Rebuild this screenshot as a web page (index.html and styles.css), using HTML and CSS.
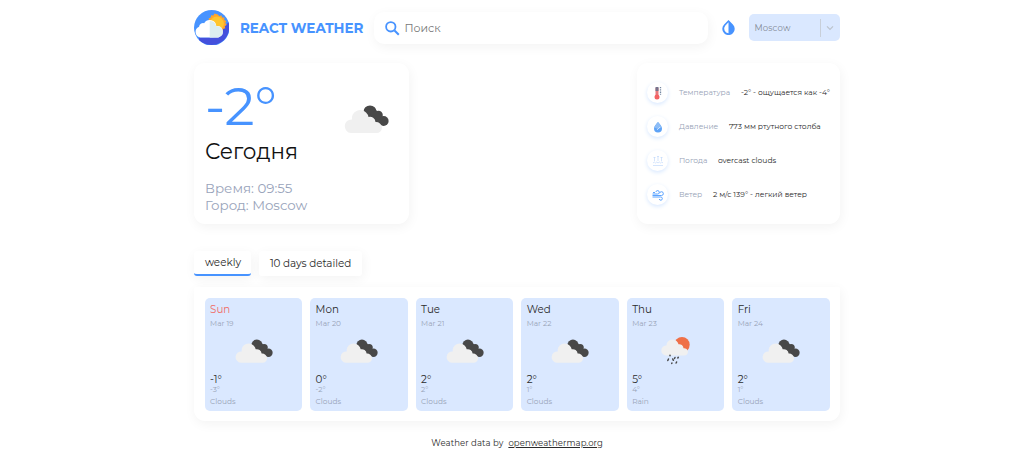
FILE: index.html
```html
<!DOCTYPE html>
<html lang="ru">
<head>
<meta charset="utf-8">
<title>React Weather</title>
<link rel="stylesheet" href="styles.css">
</head>
<body>
<svg class="defs" width="0" height="0" aria-hidden="true">
  <symbol id="clouds" viewBox="0 0 45 28">
    <g fill="#484848"><circle cx="26" cy="7" r="6.6"/><circle cx="34.5" cy="10" r="4.3"/><circle cx="39.6" cy="16" r="5"/><path d="M24 11l8-6 7 8-1 7-8-3z"/></g>
    <path fill="#f0f0f0" d="M7 28a6.7 6.7 0 0 1 1-13.5A8.300 8.300 0 0 1 22 7.500a8 8 0 0 1 2.500 4.500 5.600 5.600 0 0 1 7 5A6 6 0 0 1 38 22.500a5.500 5.500 0 0 1-5.500 5.500z"/>
  </symbol>
  <symbol id="rain" viewBox="0 0 29 28">
    <circle cx="21" cy="7.700" r="7.700" fill="#ef7048"/>
    <path fill="#f0f0f0" d="M5 18.500A5 5 0 0 1 5.500 8.500 6 6 0 0 1 15.500 4a6 6 0 0 1 2 3.200 4.300 4.300 0 0 1 5 4A4 4 0 0 1 27 14.800a3.900 3.900 0 0 1-4 3.700z"/>
    <path stroke="#4a4a4a" stroke-width="1.500" stroke-linecap="round" d="M9 18.300v.5M7.500 22l-.7 1.500M11.700 22l.7 1.300M14 20.500l-.5 1M17.300 20.300l-.5.700M11 26l-.3.400M15.600 25l-.5 1"/>
  </symbol>
</svg>
<div class="container">
  <header class="header">
    <svg class="logo" viewBox="0 0 35 35">
      <circle cx="17.500" cy="17.500" r="17.500" fill="#4793ff"/>
      <path fill="#4450dc" d="M5 27h14L34 12a17.500 17.500 0 0 1-29 17.500z"/>
      <path fill="#ffa62b" d="M23.500 4.500l1.500 1.700 2-1 .7 2.200 2.300.1-.2 2.300 2.200 1-1.200 2 1.500 1.800-2 1.300.6 2.200-2.300.6-.4 2.300-2.200-.4-1.500 1.800-9-4-1-10 2-1 .3-2.200 2.200.3 1.200-2z"/>
      <circle cx="22.500" cy="13.500" r="7" fill="#ffc52e"/>
      <path fill="#fff" d="M6 27a5.500 5.500 0 0 1-1-10.500 4 4 0 0 1 5-3.500 6.500 6.500 0 0 1 12 3 5.500 5.500 0 0 1 3 10.500q-1 .5-2 .5z"/>
      <path fill="#dcedf0" d="M15.500 10.800a6.500 6.500 0 0 1 6.500 5.200 5.600 5.600 0 0 1 3 10.700l-1.500.3h-8z"/>
    </svg>
    <div class="title">REACT WEATHER</div>
    <div class="search">
      <svg viewBox="0 0 15 15"><circle cx="5.800" cy="5.800" r="4.700" fill="none" stroke="#4793ff" stroke-width="1.800"/><path d="M9.500 9.500l4.300 4.300" stroke="#4793ff" stroke-width="2"/></svg>
      <span class="search-text">Поиск</span>
    </div>
    <svg class="drop" viewBox="0 0 13 15"><path fill="#4793ff" d="M6.500 0L2.100 4.500a6.200 6.200 0 1 0 8.800 0z"/><path fill="#fff" d="M6.500 2.300v10.900A4.600 4.600 0 0 1 3.200 5.700z"/></svg>
    <div class="select"><span class="select-text">Moscow</span><i></i><svg viewBox="0 0 8 6"><path d="M1 1.300l3 3 3-3" fill="none" stroke="#bcc3cc" stroke-width="1.200"/></svg></div>
  </header>

  <section class="top">
    <div class="today">
      <div class="temp">-2°</div>
      <div class="label">Сегодня</div>
      <div class="meta">Время: 09:55</div>
      <div class="meta city">Город: Moscow</div>
      <svg class="today-icon"><use href="#clouds"/></svg>
    </div>
    <div class="info">
      <div class="row"><span class="dot"><svg viewBox="0 0 12 14"><path d="M3.500 2h3v10h-3z" fill="#e9777b"/><circle cx="5" cy="11" r="2.500" fill="#f46263"/><path d="M3.500 1h3v4h-3z" fill="#77738c"/><path d="M8.500 1v8" stroke="#7487a1" stroke-width="1.300" stroke-dasharray="1 .7"/></svg></span><span class="key k1">Температура</span><span class="val">-2° - ощущается как -4°</span></div>
      <div class="row"><span class="dot"><svg viewBox="0 0 12 14"><path fill="#5ea3f7" d="M6 2Q2 6.200 2 8.500a4 4 0 0 0 8 0Q10 6.200 6 2z"/><path fill="#8dbdf6" d="M6 2Q2.500 6 2.400 7.500L6 9l3.600-1.500Q9 5.500 6 2z"/><path d="M5 10l3-3" stroke="#e5f1ff" stroke-width=".7"/></svg></span><span class="key k2">Давление</span><span class="val">773 мм ртутного столба</span></div>
      <div class="row"><span class="dot"><svg viewBox="0 0 12 14" fill="none" stroke="#c3dafa" stroke-width=".7"><path d="M2.500 7V3m-1 1l1-1 1 1M6 7V2M5 3l1-1 1 1M9.500 7V3m-1 1l1-1 1 1M1 9l1.300-1 1.300 1 1.200-1L6 9l1.300-1 1.300 1 1.200-1L11 9M1 11.500h10"/></svg></span><span class="key k3">Погода</span><span class="val">overcast clouds</span></div>
      <div class="row"><span class="dot"><svg viewBox="0 0 12 14" fill="none" stroke="#5ca4ff" stroke-width="1"><path d="M.5 6h5a1.700 1.700 0 1 0-1.600-2M.5 7.500h9a1.900 1.900 0 1 0-1.900-2.300M.5 9h8.200a1.600 1.600 0 1 1-1.500 2M1 4.500h2"/></svg></span><span class="key k4">Ветер</span><span class="val">2 м/с 139° - легкий ветер</span></div>
    </div>
  </section>

  <nav class="tabs"><div class="tab active"><span>weekly</span></div><div class="tab wide"><span>10 days detailed</span></div></nav>

  <section class="days">
    <div class="day"><div class="name sun">Sun</div><div class="date">Mar 19</div><svg class="cloud"><use href="#clouds"/></svg><div class="hi">-1°</div><div class="lo">-3°</div><div class="desc">Clouds</div></div>
    <div class="day"><div class="name">Mon</div><div class="date">Mar 20</div><svg class="cloud"><use href="#clouds"/></svg><div class="hi">0°</div><div class="lo">-2°</div><div class="desc">Clouds</div></div>
    <div class="day"><div class="name">Tue</div><div class="date">Mar 21</div><svg class="cloud"><use href="#clouds"/></svg><div class="hi">2°</div><div class="lo">2°</div><div class="desc">Clouds</div></div>
    <div class="day"><div class="name">Wed</div><div class="date">Mar 22</div><svg class="cloud"><use href="#clouds"/></svg><div class="hi">2°</div><div class="lo">1°</div><div class="desc">Clouds</div></div>
    <div class="day"><div class="name">Thu</div><div class="date">Mar 23</div><svg class="cloud rain"><use href="#rain"/></svg><div class="hi">5°</div><div class="lo">4°</div><div class="desc">Rain</div></div>
    <div class="day"><div class="name">Fri</div><div class="date">Mar 24</div><svg class="cloud"><use href="#clouds"/></svg><div class="hi">2°</div><div class="lo">1°</div><div class="desc">Clouds</div></div>
  </section>

  <footer class="footer"><span>Weather data by</span><a>openweathermap.org</a></footer>
</div>
</body>
</html>
```
FILE: styles.css
```css
* { box-sizing: border-box; }
body { margin: 0; background: #fff; color: #2b2b2b; font-family: Montserrat, Inter, sans-serif; white-space: nowrap; }
.defs { position: absolute; }
svg { display: block; flex: none; }
.container { width: 646.500px; margin-left: 193.900px; padding-top: 9.500px; height: 462px; }
.header { display: flex; align-items: center; height: 36px; }
.logo { width: 35.500px; height: 35.500px; }
.title { width: 134.500px; margin-left: 10.500px; font-size: 13.500px; font-weight: 700; color: #4793ff; letter-spacing: 0; line-height: 20px; padding-top: 1px; }
.search { width: 334px; height: 32px; border-radius: 10px; background: #fff; box-shadow: 1px 3px 12px rgba(0,0,0,.05); display: flex; align-items: center; padding-left: 11px; gap: 4px; margin-top: 1px; }
.search svg { width: 15px; height: 15px; }
.search-text { font-size: 11px; line-height: 14px; color: #777; }
.drop { width: 13px; height: 15px; margin-left: 14px; }
.select { width: 91.500px; height: 27px; margin-left: 13.500px; border-radius: 5px; background: #dae8ff; display: flex; align-items: center; padding-left: 5.500px; }
.select-text { width: 66px; font-size: 8.500px; line-height: 11px; padding-top: 1px; color: #858c98; letter-spacing: .2px; }
.select i { width: 1px; height: 18px; background: #c8cfd9; }
.select svg { width: 8px; height: 6px; margin-left: 5px; }
.top { display: flex; justify-content: space-between; margin-top: 17.500px; }
.today, .info { height: 161px; border-radius: 11px; background: #fff; box-shadow: 1px 3px 12px rgba(0,0,0,.05); }
.today { width: 215.500px; padding: 16px 11px 0; position: relative; }
.temp { font-size: 53px; font-weight: 400; letter-spacing: 0; line-height: 54px; color: #4793ff; }
.label { font-size: 21.500px; line-height: 28px; margin-top: 4px; color: #111; }
.meta { font-size: 13.400px; line-height: 16.500px; margin-top: 15px; color: #98a3ba; }
.meta.city { margin-top: 0; }
.today-icon { position: absolute; left: 150.500px; top: 42px; width: 45px; height: 28px; }
.info { width: 203.500px; padding: 12.500px 10.500px; }
.row { display: flex; align-items: center; height: 34px; font-size: 7.550px; }
.dot { width: 21px; height: 21px; border-radius: 50%; box-shadow: 0 1.500px 4px #d8e8ff; display: flex; align-items: center; justify-content: center; margin-right: 10.500px; flex: none; }
.dot svg { width: 12px; height: 14px; }
.key { color: #98a3b7; flex: none; line-height: 9px; }
.val { color: #292929; line-height: 9px; }
.k1 { width: 62px; }
.k2 { width: 50px; }
.k3 { width: 39px; }
.k4 { width: 34px; }
.tabs { display: flex; gap: 8px; margin-top: 27px; height: 25px; }
.tab { width: 57px; border-radius: 3px; background: #fff; box-shadow: 1px 3px 12px rgba(0,0,0,.05); font-size: 10.400px; line-height: 26px; padding-left: 11px; }
.tab.active { border-bottom: 2px solid #4793ff; line-height: 24px; }
.tab.wide { width: 103px; letter-spacing: -.05px; }
.days { margin-top: 11px; height: 134px; border-radius: 2px 2px 11px 11px; background: #fff; box-shadow: 1px 3px 12px rgba(0,0,0,.05); padding: 10.500px 10.700px; display: flex; justify-content: space-between; }
.day { width: 97.500px; height: 113px; border-radius: 5px; background: #dae8ff; padding: 5px 5.500px; }
.name { font-size: 10.300px; line-height: 14px; }
.sun { color: #f16b65; }
.date, .lo, .desc { font-size: 7.400px; color: #98a3b7; }
.date { line-height: 10px; margin-top: 2px; }
.cloud { width: 38px; height: 24px; margin: 10px 0 0 24.500px; }
.rain { width: 29px; height: 28px; margin: 8px 0 -2px 28.500px; }
.hi { font-size: 10.300px; line-height: 14px; margin-top: 10.500px; }
.lo { line-height: 8px; margin-top: -1px; }
.desc { line-height: 10px; margin-top: 3px; }
.footer { margin-top: 16.500px; height: 11px; line-height: 11px; font-size: 8.500px; display: flex; justify-content: center; gap: 5px; letter-spacing: .1px; }
.footer a { text-decoration: underline; }
```
